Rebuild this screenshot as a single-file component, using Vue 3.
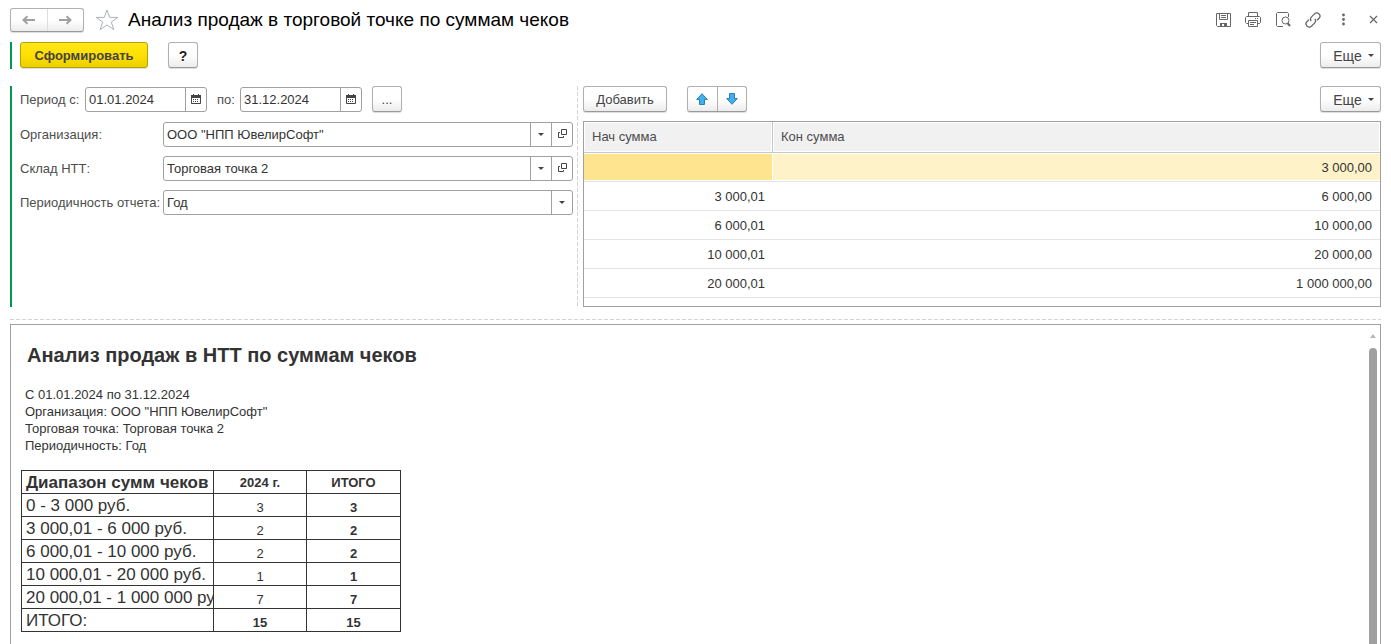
<script setup>
import { ref } from 'vue'

const dateFrom = ref('01.01.2024')
const dateTo = ref('31.12.2024')

const fields = [
  { id: 'org', label: 'Организация:', value: 'ООО "НПП ЮвелирСофт"', open: true },
  { id: 'store', label: 'Склад НТТ:', value: 'Торговая точка 2', open: true },
  { id: 'period', label: 'Периодичность отчета:', value: 'Год', open: false },
]

const ranges = [
  ['', '3 000,00'],
  ['3 000,01', '6 000,00'],
  ['6 000,01', '10 000,00'],
  ['10 000,01', '20 000,00'],
  ['20 000,01', '1 000 000,00'],
]

const reportLines = [
  'С 01.01.2024 по 31.12.2024',
  'Организация: ООО "НПП ЮвелирСофт"',
  'Торговая точка: Торговая точка 2',
  'Периодичность: Год',
]

const reportRows = [
  ['0 - 3 000 руб.', 3, 3],
  ['3 000,01 - 6 000 руб.', 2, 2],
  ['6 000,01 - 10 000 руб.', 2, 2],
  ['10 000,01 - 20 000 руб.', 1, 1],
  ['20 000,01 - 1 000 000 руб.', 7, 7],
]
</script>

<template>
  <main class="window">
    <header class="titlebar">
      <div class="pair nav">
        <button type="button" aria-label="Назад">
          <svg width="14" height="10" viewBox="0 0 14 10"><path d="M1 5H13M5.500 1.200L1.500 5L5.500 8.800" fill="none" stroke="#a0a0a0" stroke-width="2" /></svg>
        </button>
        <button type="button" aria-label="Вперед">
          <svg width="14" height="10" viewBox="0 0 14 10"><path d="M1 5H13M8.500 1.200L12.500 5L8.500 8.800" fill="none" stroke="#a0a0a0" stroke-width="2" /></svg>
        </button>
      </div>
      <button type="button" class="plain star" aria-label="В избранное">
        <svg width="24" height="22" viewBox="0 0 24 22"><path d="M12 1L14.700 8.400H22.800L16.300 13.100L18.900 20.600L12 16L5.100 20.600L7.700 13.100L1.200 8.400H9.300Z" fill="#fff" stroke="#a9b1ba" stroke-width="1" /></svg>
      </button>
      <h1>Анализ продаж в торговой точке по суммам чеков</h1>
      <div class="tools">
        <button type="button" class="plain" aria-label="Сохранить">
          <svg width="16" height="16" viewBox="0 0 16 16" fill="none" stroke="#666"><path d="M1.500 1.500H15.500V14.500H2.500L1.500 13.500Z" /><path d="M4.500 1.500V7.500H12.500V1.500M6 3.500H11M6 5.500H11" /><path d="M5 11H12V14H9V12H7V14H5Z" fill="#666" stroke="none" /></svg>
        </button>
        <button type="button" class="plain" aria-label="Печать">
          <svg width="16" height="16" viewBox="0 0 16 16" fill="none" stroke="#666"><path d="M3.500 4.500V.5H12.500V4.500M3.500 11.500H1.500L.5 10.500V5.500L1.500 4.500H14.500L15.500 5.500V10.500L14.500 11.500H12.500M3.500 8.500H12.500V14.500H3.500ZM5 10.500H11M5 12.500H9M10 6.500H11M12 6.500H13" /></svg>
        </button>
        <button type="button" class="plain" aria-label="Просмотр">
          <svg width="16" height="16" viewBox="0 0 16 16" fill="none" stroke="#666"><path d="M13.500 5V1.500L12.500.5H2.500L1.500 1.500V13.500L2.500 14.500H8" /><circle cx="10.500" cy="8.500" r="3.500" /><path d="M12.500 11L15 14" stroke-width="2" /></svg>
        </button>
        <button type="button" class="plain" aria-label="Ссылка">
          <svg width="16" height="16" viewBox="0 0 16 16" fill="none" stroke="#666" stroke-width="1.300"><path d="M6.200 9C5.200 7.600 5.400 6 6.500 4.900L9.500 1.900C10.800.7 12.500.6 13.800 1.700C15.200 3 15.300 4.900 14.100 6.200L12 8.300M9.800 6.800C10.900 8.200 10.700 9.900 9.500 11.100L6.600 14C5.300 15.200 3.500 15.300 2.200 14.200C.8 12.900.7 11 1.900 9.700L4 7.600" /></svg>
        </button>
        <button type="button" class="plain" aria-label="Меню">
          <svg width="16" height="16" viewBox="0 0 16 16" fill="#666"><circle cx="8.500" cy="3" r="1.400" /><circle cx="8.500" cy="7.500" r="1.400" /><circle cx="8.500" cy="12" r="1.400" /></svg>
        </button>
        <button type="button" class="plain" aria-label="Закрыть">
          <svg width="16" height="16" viewBox="0 0 16 16"><path d="M5 4L12 11M12 4L5 11" stroke="#666" stroke-width="1.200" /></svg>
        </button>
      </div>
    </header>

    <div class="commands">
      <button type="button" class="btn primary">Сформировать</button>
      <button type="button" class="btn help">?</button>
      <button type="button" class="btn more">Еще<span class="caret"></span></button>
    </div>

    <section class="settings">
      <form class="filters" @submit.prevent>
        <div class="dates">
          <label for="from">Период с:</label>
          <div class="field date">
            <input id="from" v-model="dateFrom" type="text">
            <button type="button" aria-label="Выбрать начало">
              <svg width="10" height="12" viewBox="0 0 10 12"><path d="M.5 2.500V9.500H9.500V2.500" fill="none" stroke="#444" /><path d="M0 1H2V0H3V1H7V0H8V1H10V4H0ZM2 5H3V6H2ZM4 5H5V6H4ZM6 5H7V6H6ZM2 7H3V8H2ZM4 7H5V8H4ZM6 7H7V8H6Z" fill="#444" /></svg>
            </button>
          </div>
          <label for="to" class="to">по:</label>
          <div class="field date">
            <input id="to" v-model="dateTo" type="text">
            <button type="button" aria-label="Выбрать конец">
              <svg width="10" height="12" viewBox="0 0 10 12"><path d="M.5 2.500V9.500H9.500V2.500" fill="none" stroke="#444" /><path d="M0 1H2V0H3V1H7V0H8V1H10V4H0ZM2 5H3V6H2ZM4 5H5V6H4ZM6 5H7V6H6ZM2 7H3V8H2ZM4 7H5V8H4ZM6 7H7V8H6Z" fill="#444" /></svg>
            </button>
          </div>
          <button type="button" class="btn dots">...</button>
        </div>
        <div v-for="f in fields" :key="f.id" class="row">
          <label :for="f.id">{{ f.label }}</label>
          <div class="field">
            <select :id="f.id"><option>{{ f.value }}</option></select>
            <span class="drop"><span class="caret"></span></span>
            <button v-if="f.open" type="button" aria-label="Открыть">
              <svg width="9" height="11" viewBox="0 0 9 11" fill="none" stroke="#444"><path d="M3.500.5H8.500V5.500H3.500ZM2 3.500H.5V8.500H5.500V7" /></svg>
            </button>
          </div>
        </div>
      </form>

      <div class="ranges">
        <div class="bar">
          <button type="button" class="btn add">Добавить</button>
          <div class="pair move">
            <button type="button" aria-label="Вверх">
              <svg width="12" height="12" viewBox="0 0 12 12"><path d="M6 .7L11.300 6.500H8.500V11.500H3.500V6.500H.7Z" fill="#41b0ee" stroke="#2c7fb0" /></svg>
            </button>
            <button type="button" aria-label="Вниз">
              <svg width="12" height="12" viewBox="0 0 12 12"><path d="M6 11.300L.7 5.500H3.500V.5H8.500V5.500H11.300Z" fill="#41b0ee" stroke="#2c7fb0" /></svg>
            </button>
          </div>
          <button type="button" class="btn more">Еще<span class="caret"></span></button>
        </div>
        <div class="grid">
          <table>
            <thead>
              <tr><th class="start">Нач сумма</th><th>Кон сумма</th></tr>
            </thead>
            <tbody>
              <tr v-for="(r, i) in ranges" :key="i" :class="{ selected: i === 0 }">
                <td>{{ r[0] }}</td><td>{{ r[1] }}</td>
              </tr>
            </tbody>
          </table>
        </div>
      </div>
    </section>

    <section class="report">
      <div class="sheet">
        <h2>Анализ продаж в НТТ по суммам чеков</h2>
        <p v-for="l in reportLines" :key="l">{{ l }}</p>
        <table>
          <colgroup><col class="c1"><col class="c2"><col></colgroup>
          <thead>
            <tr><th class="name">Диапазон сумм чеков</th><th>2024 г.</th><th>ИТОГО</th></tr>
          </thead>
          <tbody>
            <tr v-for="r in reportRows" :key="r[0]">
              <td class="name">{{ r[0] }}</td><td>{{ r[1] }}</td><td class="bold">{{ r[2] }}</td>
            </tr>
            <tr><td class="name">ИТОГО:</td><td class="bold">15</td><td class="bold">15</td></tr>
          </tbody>
        </table>
      </div>
      <div class="scroll"><span class="up"></span><span class="thumb"></span></div>
    </section>
  </main>
</template>

<style>
body {
  margin: 0;
  background: #fff;
}
</style>

<style scoped>
* {
  box-sizing: border-box;
}
.window {
  display: flex;
  flex-direction: column;
  height: 100vh;
  padding: 8px 10px 0;
  overflow: hidden;
  font: 13px/16px "Liberation Sans", Arial, sans-serif;
  color: #333;
}
button, input, select {
  margin: 0;
  padding: 0;
  font: inherit;
  color: inherit;
}
svg {
  display: block;
}
.plain {
  border: 0;
  background: none;
}
.titlebar {
  display: flex;
  align-items: center;
  height: 24px;
}
h1 {
  margin: 0 0 0 9px;
  font-size: 19px;
  line-height: 24px;
  font-weight: 400;
  color: #000;
}
.star {
  margin-left: 11px;
}
.tools {
  display: flex;
  gap: 14px;
  margin-left: auto;
}
.pair {
  display: flex;
  border: 1px solid #b0b0b0;
  border-bottom-color: #999;
  border-radius: 3px;
  background: linear-gradient(#fff 50%, #ececec);
  box-shadow: 0 1px 1px #ddd;
}
.pair button {
  display: flex;
  align-items: center;
  justify-content: center;
  border: 0;
  background: none;
}
.pair button + button {
  border-left: 1px solid #b0b0b0;
}
.nav {
  width: 74px;
  height: 24px;
}
.nav button {
  flex: 1;
}
.nav button + button {
  border-color: #ddd;
}
.move {
  width: 60px;
  height: 26px;
  margin-left: 20px;
}
.move button {
  flex: 1;
}
.btn {
  height: 26px;
  padding-top: 1px;
  border: 1px solid #b0b0b0;
  border-bottom-color: #999;
  border-radius: 3px;
  background: linear-gradient(#fff 50%, #ececec);
  box-shadow: 0 1px 1px #ddd;
  color: #444;
}
.commands {
  display: flex;
  height: 27px;
  margin-top: 10px;
  padding-left: 8px;
  border-left: 2px solid #009a4e;
}
.primary {
  width: 128px;
  border-color: #b3a100;
  background: linear-gradient(#ffe61a, #ffe000 50%, #ebcf00);
  font-weight: 700;
}
.help {
  width: 30px;
  margin-left: 20px;
  font-size: 14px;
  font-weight: 700;
  color: #222;
}
.more {
  display: flex;
  align-items: center;
  justify-content: center;
  gap: 6px;
  width: 61px;
  margin-left: auto;
  padding-left: 6px;
  font-size: 14px;
}
.caret {
  border: 3px solid transparent;
  border-top-color: #444;
  border-bottom: 0;
}
.settings {
  display: flex;
  gap: 5px;
  height: 221px;
  margin-top: 17px;
}
.filters {
  flex: 0 1 568px;
  display: flex;
  flex-direction: column;
  gap: 9px;
  padding: 0 5px 0 8px;
  border-left: 2px solid #009a4e;
  position: relative;
}
.filters::after {
  content: "";
  position: absolute;
  top: 0;
  right: 0;
  bottom: 0;
  width: 1px;
  background: repeating-linear-gradient(#d4d4d4 0 4px, transparent 4px 6px);
}
label {
  color: #4d4d4d;
}
.dates {
  display: flex;
  align-items: center;
  height: 27px;
}
.dates > label {
  width: 65px;
}
.dates > .to {
  width: 33px;
  padding-left: 10px;
}
.dots {
  align-self: flex-start;
  width: 30px;
  margin-left: 10px;
}
.row {
  display: flex;
  align-items: center;
}
.row label {
  width: 143px;
  white-space: nowrap;
}
.field {
  display: flex;
  flex: 1;
  height: 25px;
  border: 1px solid #a0a0a0;
  border-radius: 3px;
  background: #fff;
}
.date {
  flex: none;
  width: 122px;
}
.field input, .field select {
  flex: 1;
  min-width: 0;
  padding: 0 3px;
  border: 0;
  outline: 0;
  appearance: none;
  background: none;
}
.field button, .drop {
  display: flex;
  align-items: center;
  justify-content: center;
  width: 21px;
  border: 0;
  border-left: 1px solid #a0a0a0;
  background: none;
}
.ranges {
  flex: 1;
  display: flex;
  flex-direction: column;
  gap: 9px;
}
.bar {
  display: flex;
}
.add {
  width: 84px;
}
.grid {
  flex: 1;
  border: 1px solid #a0a0a0;
}
.grid table {
  width: 100%;
  border-spacing: 0;
  table-layout: fixed;
}
.grid th {
  height: 31px;
  padding: 0 8px;
  border-bottom: 1px solid #c8c8c8;
  background: #f1f1f1;
  box-shadow: inset 0 0 0 1px #fff;
  font-weight: 400;
  text-align: left;
  color: #4d4d4d;
}
.grid .start {
  width: 189px;
  border-right: 1px solid #c8c8c8;
}
.grid td {
  height: 29px;
  padding: 2px 8px 0;
  border-bottom: 1px solid #e4e4e4;
  text-align: right;
}
.selected td {
  background: #fdf2c8;
  box-shadow: inset 0 1px #fff, inset 0 -1px #fff;
}
.selected td:first-child {
  background: #fee48f;
  box-shadow: inset 0 1px #fff, inset -1px -1px #fff;
}
.report {
  flex: 1;
  display: flex;
  justify-content: space-between;
  position: relative;
  min-height: 0;
  margin-top: 17px;
  border: 1px solid #a0a0a0;
  border-bottom: 0;
}
.report::before {
  content: "";
  position: absolute;
  top: -6px;
  left: -1px;
  right: -1px;
  height: 1px;
  background: repeating-linear-gradient(90deg, #d4d4d4 0 4px, transparent 4px 6px);
}
.sheet {
  padding: 18px 0 0 10px;
}
h2 {
  margin: 0 0 19px 6px;
  font-size: 20px;
  line-height: 24px;
}
p {
  margin: 0 0 0 4px;
  line-height: 17px;
}
.sheet table {
  width: 380px;
  margin-top: 16px;
  border-collapse: collapse;
  table-layout: fixed;
}
.c1 {
  width: 192px;
}
.c2 {
  width: 93px;
}
.sheet th, .sheet td {
  height: 23px;
  padding: 1px 0 0;
  border: 1px solid #333;
  text-align: center;
  white-space: nowrap;
  overflow: hidden;
}
.sheet td {
  padding-top: 6px;
}
.sheet .name {
  padding: 1px 0 0 4px;
  font-size: 17px;
  line-height: 20px;
  text-align: left;
}
.sheet .bold {
  font-weight: 700;
}
.scroll {
  display: flex;
  flex-direction: column;
  gap: 10px;
  width: 8px;
  margin-right: 3px;
  padding-top: 9px;
}
.up {
  align-self: center;
  border: 3px solid transparent;
  border-top: 0;
  border-bottom: 4px solid #b8b8b8;
}
.thumb {
  flex: 1;
  border-radius: 4px 4px 0 0;
  background: #a0a0a0;
}
</style>
